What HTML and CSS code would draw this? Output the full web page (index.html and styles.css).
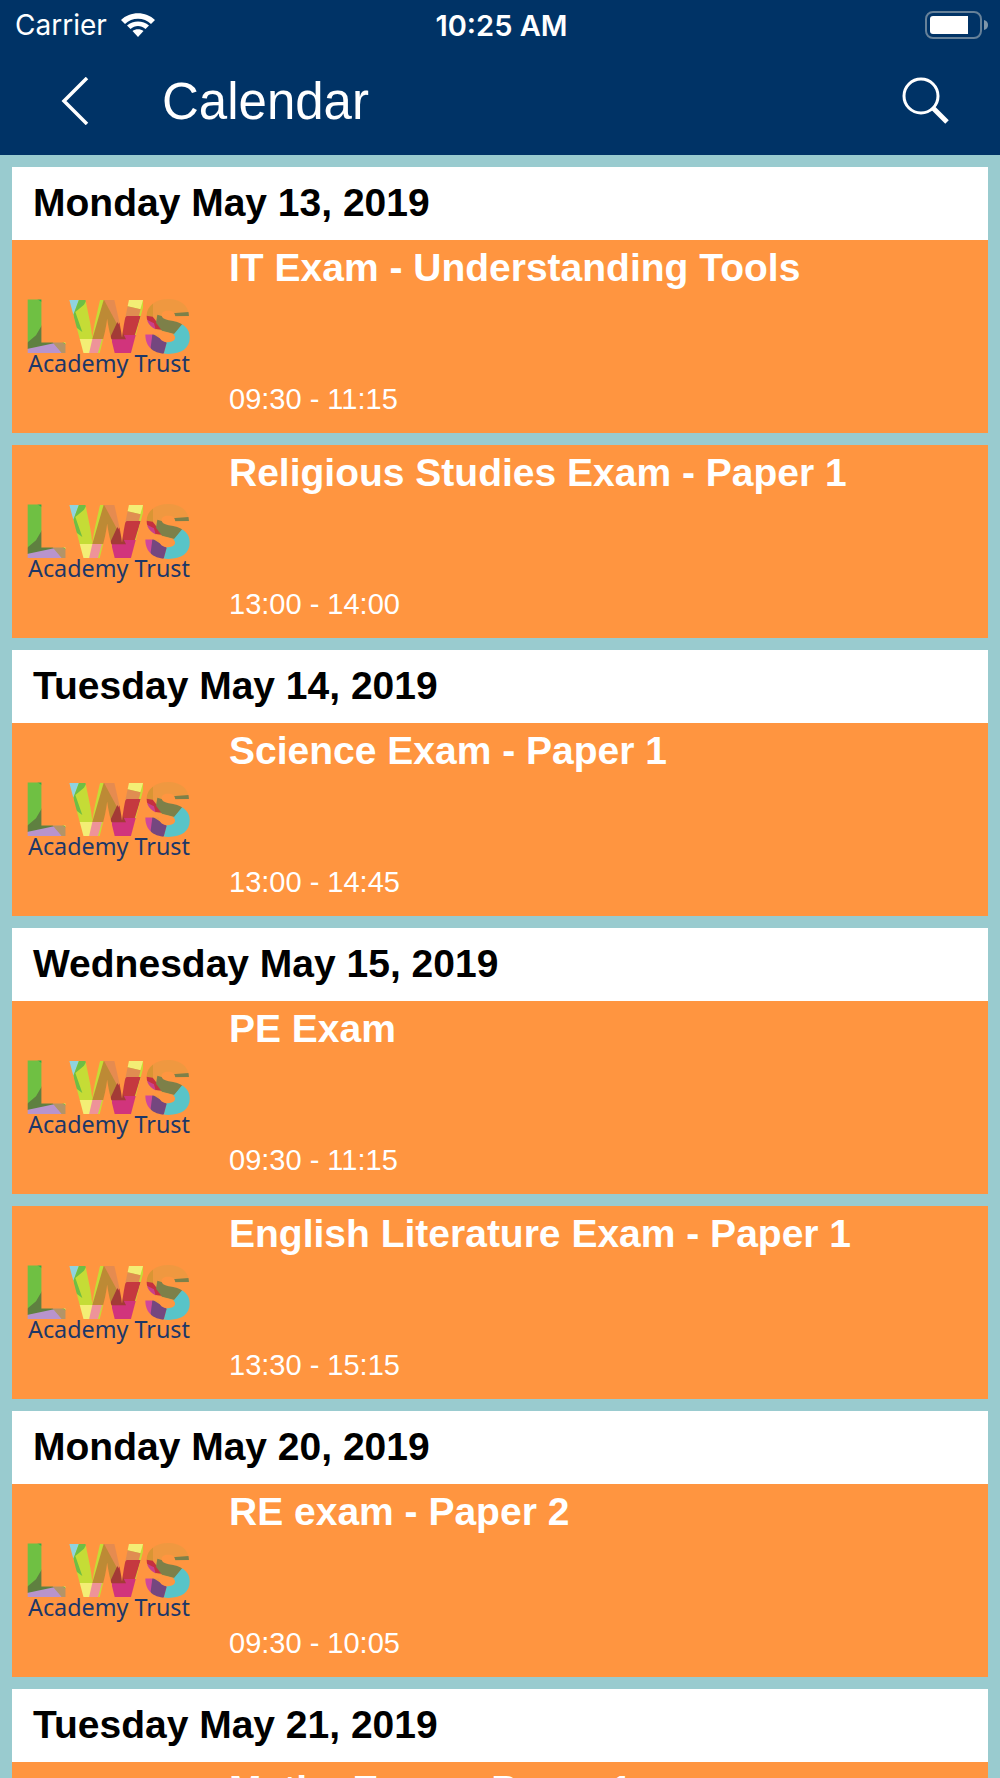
FILE: index.html
```html
<!DOCTYPE html>
<html lang="en">
<head>
    <meta charset="UTF-8">
    <meta name="viewport" content="width=device-width, initial-scale=1.0">
    <title>Calendar</title>
    <link rel="stylesheet" href="styles.css">
</head>
<body>
    <!-- shared logo, reused in every event -->
    <svg class="sprite" width="0" height="0" aria-hidden="true">
        <defs>
            <clipPath id="lws-letters">
                <text class="logo-letters" x="3 143 370" y="189"><tspan class="logo-wide">L</tspan>WS</text>
            </clipPath>
            <symbol id="lws-logo" viewBox="0 0 540 270">
                <g clip-path="url(#lws-letters)">
                    <!-- L -->
                    <rect x="10" y="20" width="140" height="175" fill="#6fc043"/>
                    <path d="M50 26H74V42Z" fill="#2bb04a"/>
                    <path d="M10 168L48 136L76 88V150H96L104 162L10 182Z" fill="#5f8040"/>
                    <path d="M10 179L102 160L132 195H10Z" fill="#b894cc"/>
                    <path d="M92 148H112L150 172V195H130L102 162Z" fill="#b39468"/>
                    <path d="M108 140H150V170Z" fill="#f3ee75"/>
                    <!-- W -->
                    <rect x="147" y="20" width="222" height="175" fill="#c5dc36"/>
                    <path d="M140 20H180L160 76Z" fill="#8fd3df"/>
                    <path d="M178 26H202L192 44L166 66L187 126L166 110L160 74Z" fill="#6fbe44"/>
                    <path d="M160 147H220V195H160Z" fill="#f3ee75"/>
                    <path d="M217 147H246L232 195H206Z" fill="#ee9399"/>
                    <path d="M252 26L285 60L320 147H217Z" fill="#bd8a35"/>
                    <path d="M247 20H300L330 70L306 130Z" fill="#e58b50"/>
                    <path d="M318 20H372L361 58L317 47Z" fill="#f3ee75"/>
                    <path d="M316 47L362 58L356 80H316L298 106Z" fill="#e08d51"/>
                    <path d="M288 108L320 78H362L344 137H278Z" fill="#c5383f"/>
                    <path d="M275 135H350L336 195H275Z" fill="#d1347c"/>
                    <path d="M292 96L318 148H268Z" fill="#a33b36"/>
                    <!-- S -->
                    <rect x="374" y="20" width="150" height="175" fill="#ef9840"/>
                    <path d="M370 60L399 40V92L370 76Z" fill="#d99534"/>
                    <path d="M370 76L398 80L430 120L400 116Z" fill="#c5303f"/>
                    <path d="M370 84L402 100L408 122L370 112Z" fill="#c9408a"/>
                    <path d="M412 74L492 98L464 132L426 122L408 98Z" fill="#7d8049"/>
                    <path d="M456 70L516 65V77L456 80Z" fill="#7d8049"/>
                    <path d="M490 98L524 88V195H430L440 156L464 130Z" fill="#58c4c8"/>
                    <path d="M396 130L440 158L430 195H398L390 170Z" fill="#74477f"/>
                    <path d="M366 130L398 126L391 180L366 176Z" fill="#d0489b"/>
                </g>
                <text class="logo-caption" x="24" y="245">Academy Trust</text>
            </symbol>
        </defs>
    </svg>

    <header class="header">
        <div class="status-bar">
            <div class="carrier">
                <span>Carrier</span>
                <svg width="34" height="24" viewBox="0 0 34 24" fill="#fff" aria-hidden="true">
                    <path d="M0 7C9-2 25-2 34 7L30 11C23 4 11 4 4 11Z"/>
                    <path d="M6 12.500C12 7 22 7 28 12.500L24.500 16C20 12 14 12 9.500 16Z"/>
                    <path d="M11.500 18C14.500 15.500 19.500 15.500 22.500 18L17 24Z"/>
                </svg>
            </div>
            <div class="clock">10:25 AM</div>
            <svg class="battery" width="63" height="28" viewBox="0 0 63 28" aria-hidden="true">
                <rect x="1" y="1" width="55" height="26" rx="7" fill="none" stroke="#668199" stroke-width="2"/>
                <path d="M8 5H43V23H8Q5 23 5 20V8Q5 5 8 5Z" fill="#fff"/>
                <path d="M59 9Q63 10 63 14T59 19Z" fill="#7f96aa"/>
            </svg>
        </div>
        <nav class="nav-bar">
            <button class="icon-button" type="button" aria-label="Back">
                <svg width="28" height="48" viewBox="0 0 28 48" fill="none" stroke="#fff" stroke-width="3.500" aria-hidden="true">
                    <path d="M26 1L3 24L26 47"/>
                </svg>
            </button>
            <h1>Calendar</h1>
            <button class="icon-button" type="button" aria-label="Search">
                <svg width="48" height="48" viewBox="0 0 48 48" fill="none" stroke="#fff" aria-hidden="true">
                    <circle cx="19" cy="19" r="17" stroke-width="3"/>
                    <path d="M31 31L45 45" stroke-width="5"/>
                </svg>
            </button>
        </nav>
    </header>

    <main class="calendar">
        <section class="day">
            <h2>Monday May 13, 2019</h2>
            <ul>
                <li class="event">
                    <svg class="logo" role="img" aria-label="LWS Academy Trust"><use href="#lws-logo"/></svg>
                    <div class="event-info">
                        <h3>IT Exam - Understanding Tools</h3>
                        <p>09:30 - 11:15</p>
                    </div>
                </li>
                <li class="event">
                    <svg class="logo" role="img" aria-label="LWS Academy Trust"><use href="#lws-logo"/></svg>
                    <div class="event-info">
                        <h3>Religious Studies Exam - Paper 1</h3>
                        <p>13:00 - 14:00</p>
                    </div>
                </li>
            </ul>
        </section>
        <section class="day">
            <h2>Tuesday May 14, 2019</h2>
            <ul>
                <li class="event">
                    <svg class="logo" role="img" aria-label="LWS Academy Trust"><use href="#lws-logo"/></svg>
                    <div class="event-info">
                        <h3>Science Exam - Paper 1</h3>
                        <p>13:00 - 14:45</p>
                    </div>
                </li>
            </ul>
        </section>
        <section class="day">
            <h2>Wednesday May 15, 2019</h2>
            <ul>
                <li class="event">
                    <svg class="logo" role="img" aria-label="LWS Academy Trust"><use href="#lws-logo"/></svg>
                    <div class="event-info">
                        <h3>PE Exam</h3>
                        <p>09:30 - 11:15</p>
                    </div>
                </li>
                <li class="event">
                    <svg class="logo" role="img" aria-label="LWS Academy Trust"><use href="#lws-logo"/></svg>
                    <div class="event-info">
                        <h3>English Literature Exam - Paper 1</h3>
                        <p>13:30 - 15:15</p>
                    </div>
                </li>
            </ul>
        </section>
        <section class="day">
            <h2>Monday May 20, 2019</h2>
            <ul>
                <li class="event">
                    <svg class="logo" role="img" aria-label="LWS Academy Trust"><use href="#lws-logo"/></svg>
                    <div class="event-info">
                        <h3>RE exam - Paper 2</h3>
                        <p>09:30 - 10:05</p>
                    </div>
                </li>
            </ul>
        </section>
        <section class="day">
            <h2>Tuesday May 21, 2019</h2>
            <ul>
                <li class="event">
                    <svg class="logo" role="img" aria-label="LWS Academy Trust"><use href="#lws-logo"/></svg>
                    <div class="event-info">
                        <h3>Maths Exam - Paper 1</h3>
                    </div>
                </li>
            </ul>
        </section>
    </main>
</body>
</html>
```
FILE: styles.css
```css
* {
    box-sizing: border-box;
}
body {
    display: flex;
    flex-direction: column;
    height: 100vh;
    margin: 0;
    background-color: #99cbcf;
    font-family: "Liberation Sans", Arial, sans-serif;
}
h1, h2, h3, p, ul {
    margin: 0;
    padding: 0;
}
ul {
    list-style: none;
}
.sprite {
    position: absolute;
}

/* header */
.header {
    flex: none;
    background-color: #003366;
    color: white;
}
.status-bar {
    display: grid;
    grid-template-columns: 1fr auto 1fr;
    align-items: center;
    height: 50px;
    padding: 0 12px 0 15px;
    font-family: Inter, sans-serif;
    font-size: 28px;
}
.carrier {
    display: flex;
    align-items: center;
    gap: 14px;
}
.clock {
    font-size: 29px;
    font-weight: 600;
}
.battery {
    justify-self: end;
}
.nav-bar {
    display: flex;
    align-items: center;
    height: 105px;
    padding: 0 50px 3px 61px;
}
.nav-bar h1 {
    flex: 1;
    margin-left: 73px;
    font-size: 51px;
    font-weight: normal;
}
.icon-button {
    display: flex;
    padding: 0;
    border: none;
    background: none;
    cursor: pointer;
}

/* list of days */
.calendar {
    flex: 1;
    min-height: 0;
    padding: 12px;
    overflow-y: auto;
    scrollbar-width: none;
}
.day {
    margin-bottom: 12px;
}
.day h2 {
    padding: 14px 21px 15px;
    background-color: white;
    color: black;
    font-size: 39px;
    line-height: 44px;
}
.event {
    display: flex;
    align-items: center;
    min-height: 193px;
    padding-left: 8px;
    background-color: #ff9540;
    color: white;
}
.event + .event {
    margin-top: 12px;
}
.logo {
    flex: none;
    width: 180px;
    height: 90px;
    margin-bottom: 4px;
}
.event-info {
    display: flex;
    flex: 1;
    flex-direction: column;
    align-self: stretch;
    justify-content: space-between;
    margin-left: 29px;
    padding: 6px 0 17px;
}
.event-info h3 {
    font-size: 39px;
    line-height: 44px;
}
.event-info p {
    font-size: 29px;
    line-height: 34px;
}

/* logo */
.logo-letters {
    font-family: Inter, sans-serif;
    font-size: 219px;
    font-weight: 900;
}
.logo-wide {
    font-family: "DejaVu Sans", sans-serif;
    font-weight: bold;
}
.logo-caption {
    fill: #1c3768;
    font-family: "Noto Sans", sans-serif;
    font-size: 70px;
}
```
